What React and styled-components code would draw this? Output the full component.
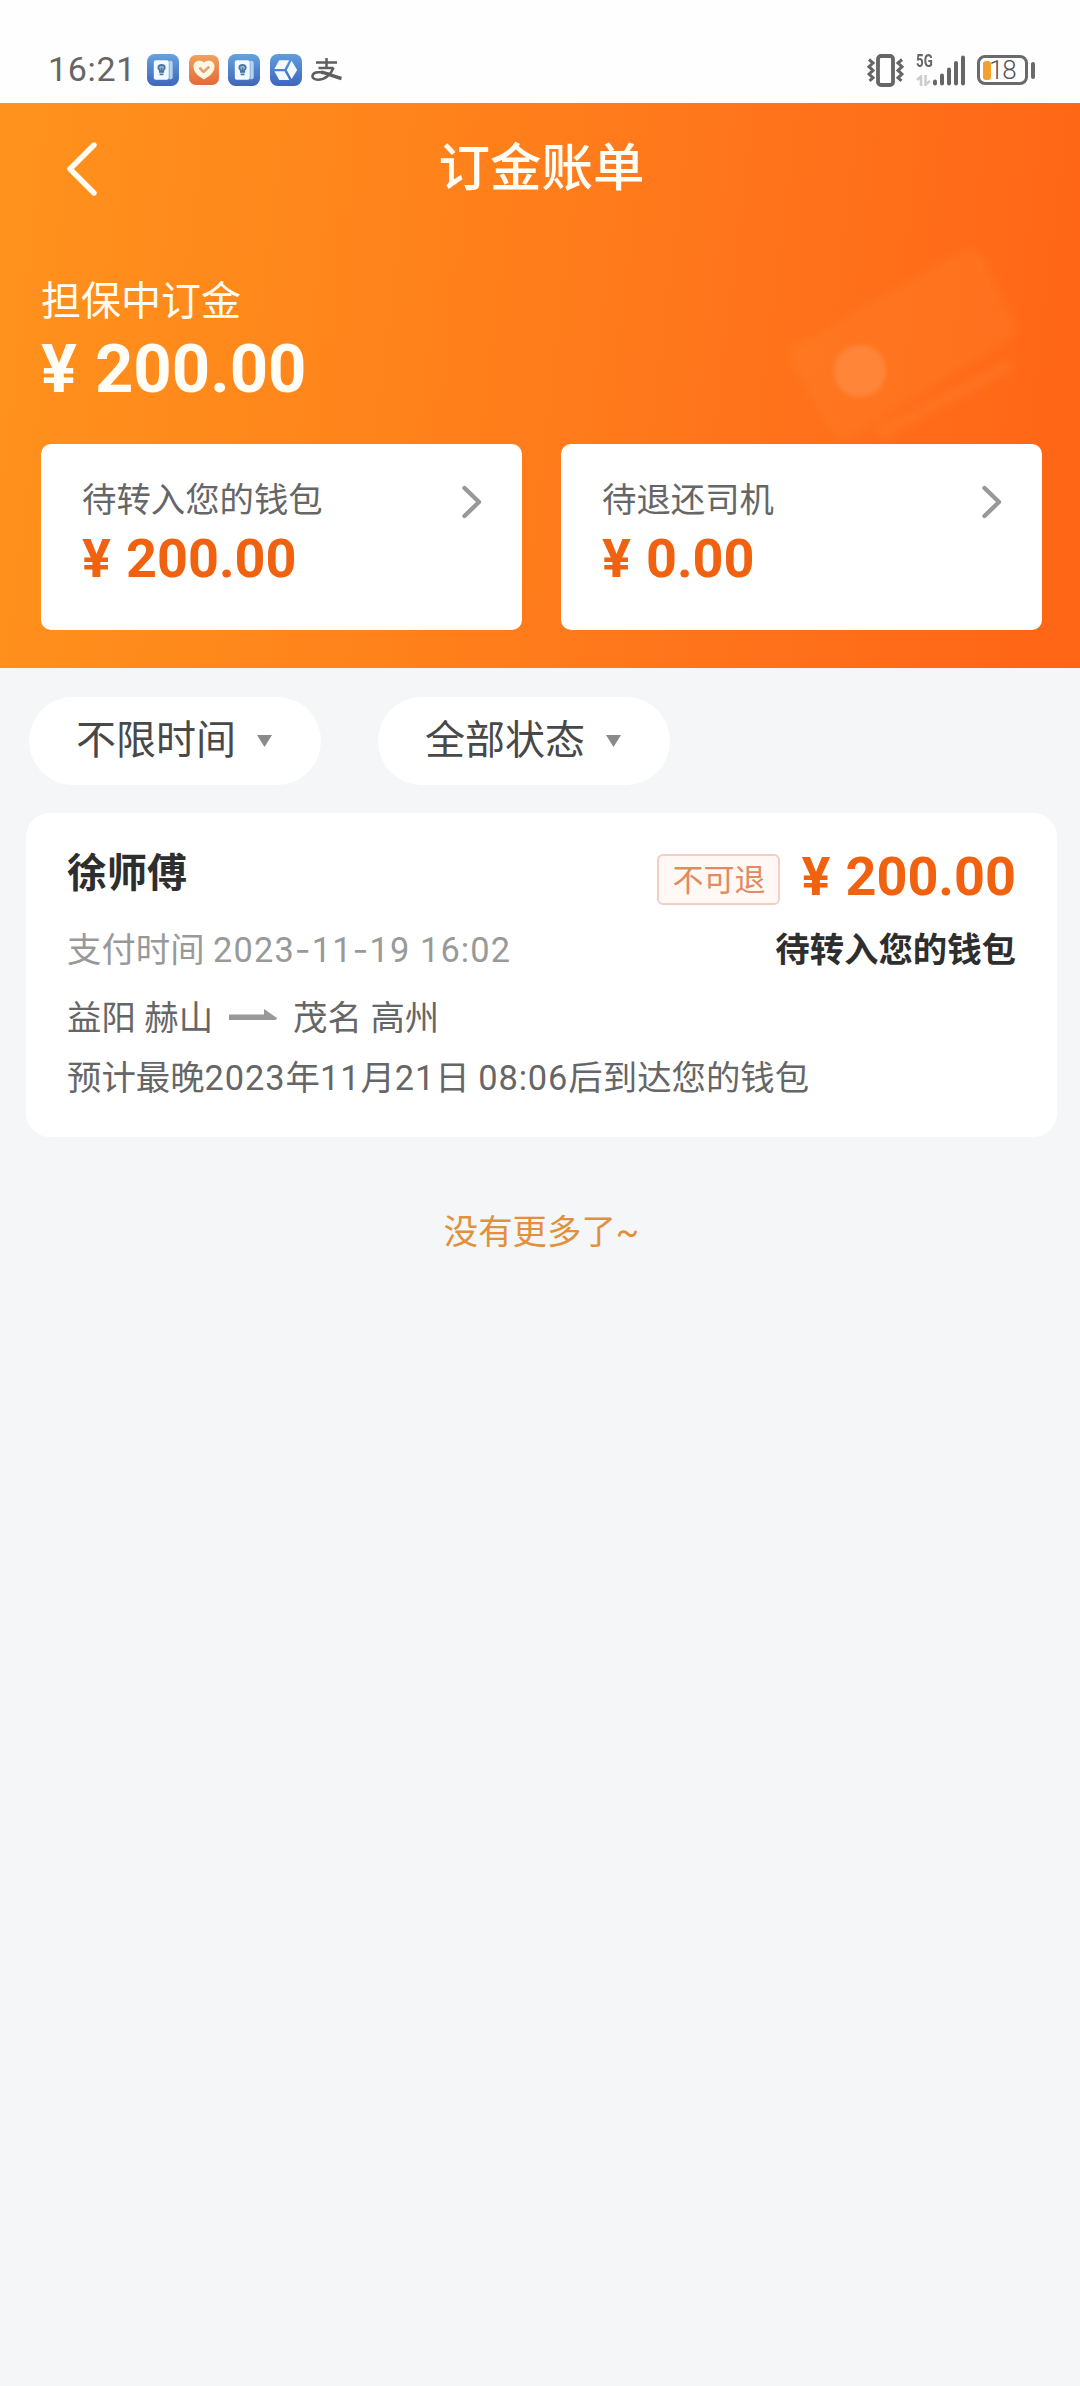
import { Fragment } from 'react';
import styled, { createGlobalStyle } from 'styled-components';

const GlobalStyle = createGlobalStyle`
  * {
    box-sizing: border-box;
  }

  body {
    margin: 0;
    background: #f4f6f8;
    font-family: Roboto, 'Noto Sans CJK SC', sans-serif;
    color: #333;
  }

  svg {
    display: block;
    flex-shrink: 0;
  }
`;

const Page = styled.div`
  width: 1080px;
  min-height: 2386px;
  background: #f4f6f8;
  overflow: hidden;
`;

const StatusBar = styled.div`
  display: flex;
  align-items: center;
  justify-content: space-between;
  height: 103px;
  padding: 37px 45px 0 48px;
  background: #fefefe;
`;

const StatusGroup = styled.div`
  display: flex;
  align-items: center;
`;

const Clock = styled.span`
  width: 99px;
  margin-top: -2px;
  font-size: 34px;
  line-height: 40px;
  letter-spacing: 0.7px;
  color: #666;
`;

const AppIcons = styled.div`
  display: flex;
  align-items: center;
  gap: 9.5px;
`;

const Network = styled.div`
  display: flex;
  align-items: flex-end;
  height: 32px;
  margin: 0 12px;
`;

const NetworkType = styled.div`
  display: flex;
  flex-direction: column;
  justify-content: space-between;
  width: 17px;
  height: 32px;
  color: #666;
`;

const Generation = styled.span`
  font-size: 18.5px;
  font-weight: 700;
  line-height: 14px;
  transform: scaleX(0.72);
  transform-origin: left;
`;

const Battery = styled.div`
  display: flex;
  align-items: center;
  gap: 3px;
`;

const BatteryBody = styled.div`
  display: flex;
  align-items: center;
  width: 51px;
  height: 30px;
  padding-left: 3px;
  border: 3px solid #6a6a6a;
  border-radius: 8px;
  font-size: 26px;
  font-weight: 300;
  line-height: 24px;
  letter-spacing: -1.2px;
  color: #555;
`;

const BatteryLevel = styled.i`
  width: 8px;
  height: 19px;
  margin-right: -2px;
  border-radius: 3px;
  background: #f3a02c;
`;

const BatteryCap = styled.i`
  width: 4px;
  height: 17px;
  border-radius: 2px;
  background: #6a6a6a;
`;

const Header = styled.header`
  position: relative;
  height: 565px;
  color: #fffdf5;
  background: linear-gradient(97deg, #ff921c 0%, #ff841b 35%, #ff751b 65%, #ff6b18 85%, #ff6515 100%);
`;

const Watermark = styled.svg`
  position: absolute;
  top: 131px;
  right: 50px;
`;

const NavBar = styled.div`
  display: grid;
  grid-template-columns: 100px 1fr 97px;
  align-items: center;
  height: 132px;
`;

const BackButton = styled.button`
  padding: 0 0 0 65px;
  border: 0;
  background: none;
`;

const Title = styled.h1`
  margin: 0;
  font-size: 51.5px;
  font-weight: 500;
  line-height: 76px;
  text-align: center;
`;

const Summary = styled.div`
  padding: 42px 41px 0;
`;

const SummaryLabel = styled.div`
  font-size: 40px;
  line-height: 50px;
`;

const Amount = styled.div`
  display: flex;
  gap: ${({ $size }) => Math.round($size * 0.27)}px;
  font-size: ${({ $size }) => $size}px;
  font-weight: 700;
  line-height: ${({ $line }) => $line}px;
  color: ${({ $color }) => $color || '#f0620f'};
`;

const Wallets = styled.div`
  position: relative;
  display: grid;
  grid-template-columns: 1fr 1fr;
  gap: 39px;
  padding: 33px 38px 0 41px;
`;

const WalletCard = styled.div`
  display: flex;
  align-items: flex-start;
  justify-content: space-between;
  height: 186px;
  padding: 33px 40px 0 41px;
  border-radius: 10px;
  background: #fff;

  svg {
    margin-top: 8px;
  }
`;

const WalletLabel = styled.div`
  font-size: 34.4px;
  line-height: 46px;
  color: #666;
`;

const Filters = styled.div`
  display: flex;
  gap: 57px;
  padding: 29px 29px 28px;
`;

const FilterPill = styled.button`
  display: flex;
  align-items: center;
  gap: 21px;
  width: 292px;
  height: 88px;
  padding: 0 0 0 47px;
  border: 0;
  border-radius: 44px;
  background: #fff;
  font-family: inherit;
  font-size: 40px;
  line-height: 50px;
  color: #484848;
`;

const BillCard = styled.section`
  height: 324px;
  margin: 0 23px 0 26px;
  padding: 31px 41px 0;
  border-radius: 24px;
  background: #fff;
`;

const BillRow = styled.div`
  display: flex;
  align-items: center;
  justify-content: space-between;
  height: ${({ $height }) => $height}px;
`;

const Driver = styled.div`
  margin-top: -6px;
  font-size: 40px;
  font-weight: 700;
  line-height: 50px;
  color: #2e2e2e;
`;

const Price = styled.div`
  display: flex;
  align-items: center;
  gap: 21px;
`;

const Tag = styled.span`
  height: 51px;
  margin-top: 4px;
  padding: 0 13px;
  border: 2px solid #f6cdc4;
  border-radius: 6px;
  background: #fff8f5;
  font-size: 31px;
  line-height: 50px;
  color: #e28a62;
`;

const PaidAt = styled.span`
  font-size: 34.4px;
  color: #999;
`;

const DateText = styled.span`
  letter-spacing: ${({ $wide }) => ($wide ? 1.1 : 0.9)}px;
`;

const Dash = styled.span`
  font-family: Inter, sans-serif;
  line-height: 0;
`;

const BillStatus = styled.span`
  font-size: 34.4px;
  font-weight: 700;
  color: #2e2e2e;
`;

const Route = styled.div`
  display: flex;
  align-items: center;
  gap: 16px;
  height: 62px;
  font-size: 34.4px;
  color: #666;
`;

const Arrival = styled.div`
  font-size: 34.4px;
  line-height: 64px;
  color: #666;
`;

const ListEnd = styled.div`
  margin-top: 69px;
  padding-left: 3px;
  font-size: 34.4px;
  line-height: 52px;
  text-align: center;
  color: #e2903c;
`;

const wallets = [
  { label: '待转入您的钱包', amount: '200.00' },
  { label: '待退还司机', amount: '0.00' },
];

const filters = ['不限时间', '全部状态'];

function Money({ value, ...rest }) {
  return (
    <Amount {...rest}>
      <span>¥</span>
      <span>{value}</span>
    </Amount>
  );
}

function DateTime({ date, time }) {
  return (
    <DateText $wide>
      {date.split('-').map((part, i) => (
        <Fragment key={i}>
          {i > 0 && <Dash>-</Dash>}
          {part}
        </Fragment>
      ))}{' '}
      {time}
    </DateText>
  );
}

function BookIcon({ id }) {
  return (
    <svg width='32' height='32' viewBox='0 0 33 33'>
      <defs>
        <linearGradient id={id} x1='0' y1='0' x2='0' y2='1'>
          <stop offset='0' stopColor='#65a3dc' />
          <stop offset='1' stopColor='#3f66bb' />
        </linearGradient>
      </defs>
      <rect width='33' height='33' rx='8' fill={`url(#${id})`} />
      <path d='M23 7h1.500q2 0 2 2v15q0 2-2 2H23z' fill='#b4d4f2' />
      <rect x='7' y='6.500' width='15.500' height='20' rx='2' fill='#f3fafd' />
      <path
        d='M13.300 18.500v-1.500C10.800 15.500 11 11.300 15 11.300S19.200 15.500 16.700 17v1.500z'
        fill='#9dbbd6'
        stroke='#4a76a6'
        strokeWidth='1.900'
      />
      <path d='M15 14v5M13 21h4' stroke='#4a76a6' strokeWidth='1.700' fill='none' />
    </svg>
  );
}

function HeartIcon() {
  return (
    <svg width='30' height='30' viewBox='0 0 30 30'>
      <defs>
        <linearGradient id='heart' x1='0' y1='0' x2='0' y2='1'>
          <stop offset='0' stopColor='#f0a25e' />
          <stop offset='1' stopColor='#e5693a' />
        </linearGradient>
      </defs>
      <rect width='30' height='30' rx='7' fill='url(#heart)' />
      <path
        d='M15 7.500C12.500 4.500 4.500 5 4.500 11.500C4.500 17.500 10 21.500 15 24.500C20 21.500 25.500 17.500 25.500 11.500C25.500 5 17.500 4.500 15 7.500Z'
        fill='#fff6e2'
      />
      <path
        d='M11.200 13.500l3.400 3.400 5-4.600'
        fill='none'
        stroke='#dfa273'
        strokeWidth='2.600'
        strokeLinecap='round'
        strokeLinejoin='round'
      />
    </svg>
  );
}

function CubeIcon() {
  return (
    <svg width='32' height='32' viewBox='0 0 33 33'>
      <defs>
        <linearGradient id='cube' x1='0' y1='0' x2='0' y2='1'>
          <stop offset='0' stopColor='#5f9edb' />
          <stop offset='1' stopColor='#3f66bb' />
        </linearGradient>
      </defs>
      <rect width='33' height='33' rx='8' fill='url(#cube)' />
      <path d='M9.500 6.500h10.300l-4.800 9H4.500z' fill='#f3faff' />
      <path d='M4.500 17.800H15l5 9H9.500z' fill='#f3faff' />
      <path d='M22.300 7L28 16.500l-5.700 9.300-5-9.300z' fill='#f3faff' />
    </svg>
  );
}

function PayIcon() {
  return (
    <svg width='31' height='26' viewBox='0 0 31 26' fill='none' stroke='#5e5e5e' strokeWidth='2.500'>
      <path d='M5 5.500h21M15.500 1v10M7.500 11h15' />
      <path d='M22.500 10.800C20 17.500 14 22.800 7 22.800C2.800 22.800 1.200 20.500 1.500 18.600C2.200 15.500 6 14.800 10 15.300' />
      <path d='M10 15.300C16 16 22 19.500 30.500 21.500' strokeWidth='3.400' />
    </svg>
  );
}

function VibrateIcon() {
  return (
    <svg width='37' height='33' viewBox='0 0 37 33' fill='none' stroke='#666' strokeWidth='3'>
      <rect x='11' y='2' width='15' height='29' rx='3' strokeWidth='3.800' />
      <path d='M2 5.500l4 3.500-4 3.700 4 3.700-4 3.700 4 3.700-3.500 3' />
      <path d='M35 5.500l-4 3.500 4 3.700-4 3.700 4 3.700-4 3.700 3.500 3' />
    </svg>
  );
}

function DataIcon() {
  return (
    <svg width='15' height='11' viewBox='0 0 15 11' fill='none' stroke='#cdcdcd' strokeWidth='2.600'>
      <path d='M1 5L5 1.500V11M9.500 0v9.500L14 6' />
    </svg>
  );
}

function SignalIcon() {
  return (
    <svg width='32' height='32' viewBox='0 0 32 31' fill='#666'>
      <rect x='0' y='25' width='4' height='6' rx='2' />
      <rect x='7' y='19' width='4' height='12' rx='2' />
      <rect x='14' y='13' width='4' height='18' rx='2' />
      <rect x='21' y='6.500' width='4' height='24.500' rx='2' />
      <rect x='28' y='1' width='4' height='30' rx='2' />
    </svg>
  );
}

function Chevron() {
  return (
    <svg width='20' height='34' viewBox='0 0 20 34' fill='none'>
      <path
        d='M2.500 3L17 17 2.500 31'
        stroke='#999'
        strokeWidth='4.400'
        strokeLinecap='round'
        strokeLinejoin='round'
      />
    </svg>
  );
}

function Triangle() {
  return (
    <svg width='15' height='12' viewBox='0 0 15 12'>
      <path d='M0 0h15L7.500 12z' fill='#8a8a8a' />
    </svg>
  );
}

export default function App() {
  return (
    <Page>
      <GlobalStyle />
      <StatusBar>
        <StatusGroup>
          <Clock>16:21</Clock>
          <AppIcons>
            <BookIcon id='book-a' />
            <HeartIcon />
            <BookIcon id='book-b' />
            <CubeIcon />
            <PayIcon />
          </AppIcons>
        </StatusGroup>
        <StatusGroup>
          <VibrateIcon />
          <Network>
            <NetworkType>
              <Generation>5G</Generation>
              <DataIcon />
            </NetworkType>
            <SignalIcon />
          </Network>
          <Battery>
            <BatteryBody>
              <BatteryLevel />
              18
            </BatteryBody>
            <BatteryCap />
          </Battery>
        </StatusGroup>
      </StatusBar>

      <Header>
        <Watermark width='250' height='220' viewBox='0 0 250 220'>
          <defs>
            <filter id='soften'>
              <feGaussianBlur stdDeviation='4' />
            </filter>
            <filter id='soften-dot'>
              <feGaussianBlur stdDeviation='2' />
            </filter>
          </defs>
          <g filter='url(#soften)'>
            <path
              d='M14 112L180 18Q194 10 204 24L234 88Q238 100 230 106L64 206Q50 200 42 184L10 126Q8 116 14 112Z'
              fill='#ff9038'
              fillOpacity='.2'
            />
            <path d='M98 200L232 130' stroke='#ff9a58' strokeOpacity='.16' strokeWidth='12' />
          </g>
          <circle cx='80' cy='137' r='26' fill='#ff9a5c' fillOpacity='.42' filter='url(#soften-dot)' />
        </Watermark>
        <NavBar>
          <BackButton aria-label='返回'>
            <svg width='33' height='56' viewBox='0 0 33 56' fill='none'>
              <path
                d='M29 4L5 28l24 24'
                stroke='#fffdf5'
                strokeWidth='5.400'
                strokeLinecap='round'
                strokeLinejoin='round'
              />
            </svg>
          </BackButton>
          <Title>订金账单</Title>
        </NavBar>
        <Summary>
          <SummaryLabel>担保中订金</SummaryLabel>
          <Money value='200.00' $size={67} $line={84} $color='#fffdf5' />
        </Summary>
        <Wallets>
          {wallets.map(({ label, amount }) => (
            <WalletCard key={label}>
              <div>
                <WalletLabel>{label}</WalletLabel>
                <Money value={amount} $size={54} $line={72} />
              </div>
              <Chevron />
            </WalletCard>
          ))}
        </Wallets>
      </Header>

      <Filters>
        {filters.map((label) => (
          <FilterPill key={label}>
            {label}
            <Triangle />
          </FilterPill>
        ))}
      </Filters>

      <BillCard>
        <BillRow $height={66}>
          <Driver>徐师傅</Driver>
          <Price>
            <Tag>不可退</Tag>
            <Money value='200.00' $size={54} $line={64} />
          </Price>
        </BillRow>
        <BillRow $height={74}>
          <PaidAt>
            支付时间 <DateTime date='2023-11-19' time='16:02' />
          </PaidAt>
          <BillStatus>待转入您的钱包</BillStatus>
        </BillRow>
        <Route>
          <span>益阳 赫山</span>
          <svg width='48' height='12' viewBox='0 0 48 12'>
            <path d='M0 5.500h35V0l13 9q0 2-2 2H0z' fill='#999' />
          </svg>
          <span>茂名 高州</span>
        </Route>
        <Arrival>
          预计最晚<DateText>2023</DateText>年<DateText>11</DateText>月<DateText>21</DateText>日{' '}
          <DateText>08:06</DateText>后到达您的钱包
        </Arrival>
      </BillCard>

      <ListEnd>没有更多了~</ListEnd>
    </Page>
  );
}
